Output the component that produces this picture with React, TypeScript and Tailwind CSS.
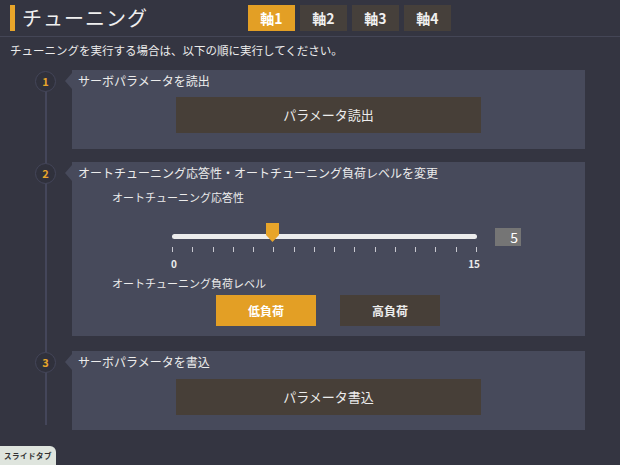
import { useState } from 'react';

const font = { fontFamily: '"Noto Sans CJK JP", "Noto Sans", sans-serif' };

const StepCircle = ({ n }: { n: number }) => (
  <div className="flex h-[21px] w-[21px] items-center justify-center rounded-full border border-[#44465a] bg-[#30313c] text-[11px] font-bold text-[#e8a52a]">
    {n}
  </div>
);

const Pointer = () => (
  <div className="h-0 w-0 border-y-[8px] border-r-[7px] border-y-transparent border-r-[#474a5b]"></div>
);

const Step = ({
  n,
  title,
  children,
}: {
  n: number;
  title: string;
  children: React.ReactNode;
}) => (
  <div className="flex">
    <div className="ml-[35px] mt-[1px] flex w-[30px] items-start">
      <StepCircle n={n} />
    </div>
    <div className="mt-[3px]">
      <Pointer />
    </div>
    <div className="w-[513px] bg-[#474a5b]">
      <div className="ml-[6px] mt-[2px] h-[18px] text-[12px] leading-[18px] text-[#ececec]">
        {title}
      </div>
      {children}
    </div>
  </div>
);

const App = () => {
  const [axis, setAxis] = useState(1);
  const [load, setLoad] = useState(0);
  const value = 5;
  const ticks = Array.from({ length: 16 }, (_, i) => i);

  return (
    <div
      className="relative h-[465px] w-[620px] overflow-hidden bg-[#343541] text-[#ececec]"
      style={font}
    >
      <div className="flex h-[37px] items-center border-b border-[#444656]">
        <div className="ml-[10px] h-[26px] w-[5px] bg-[#e8a52a]"></div>
        <div className="ml-[7px] w-[226px] text-[20px] leading-[26px] tracking-[1px] text-[#f0f0f0]">
          チューニング
        </div>
        <div className="flex gap-[5px]">
          {[1, 2, 3, 4].map((i) => (
            <button
              key={i}
              onClick={() => setAxis(i)}
              className={`h-[26px] w-[47px] text-[14px] font-bold ${
                axis === i
                  ? 'bg-[#e39f25] text-white'
                  : 'bg-[#46403b] text-[#f0f0f0]'
              }`}
            >
              軸{i}
            </button>
          ))}
        </div>
      </div>

      <div className="ml-[10px] mt-[5px] text-[11.5px] leading-[16px]">
        チューニングを実行する場合は、以下の順に実行してください。
      </div>

      <div className="relative mt-[12px]">
        <div className="absolute left-[45px] top-[10px] h-[345px] w-[2px] bg-[#44465a]"></div>
        <div className="relative flex flex-col gap-[13px]">
          <Step n={1} title="サーボパラメータを読出">
            <div className="ml-[104px] mt-[7px] flex h-[36px] w-[305px] items-center justify-center bg-[#473f38] text-[13px]">
              パラメータ読出
            </div>
            <div className="h-[16px]"></div>
          </Step>

          <Step n={2} title="オートチューニング応答性・オートチューニング負荷レベルを変更">
            <div className="ml-[40px] mt-[7px] text-[11px] leading-[16px]">
              オートチューニング応答性
            </div>
            <div className="mt-[20px] flex items-start">
              <div className="relative ml-[100px] w-[305px]">
                <div className="mt-[9px] h-[5px] w-[305px] rounded-full bg-[#ececec]"></div>
                <svg
                  className="absolute left-[93px] -top-[2px]"
                  width="15"
                  height="19"
                  viewBox="0 0 15 19"
                >
                  <path d="M1 0 H14 V12 L7.5 19 L1 12 Z" fill="#e8a52a" />
                </svg>
                <div className="mt-[8px] flex justify-between">
                  {ticks.map((t) => (
                    <div key={t} className="h-[5px] w-[1px] bg-[#c8c8d0]"></div>
                  ))}
                </div>
                <div className="mt-[5px] flex justify-between text-[10px] font-bold leading-[14px]">
                  <span className="-ml-[1px]">0</span>
                  <span className="-mr-[3px]">15</span>
                </div>
              </div>
              <div className="ml-[18px] mt-[3px] flex h-[18px] w-[26px] items-center justify-end bg-[#757575] pr-[3px] text-[14px] text-white">
                {value}
              </div>
            </div>
            <div className="ml-[40px] mt-[4px] text-[11px] leading-[16px]">
              オートチューニング負荷レベル
            </div>
            <div className="ml-[144px] mt-[4px] flex gap-[24px]">
              <button
                onClick={() => setLoad(0)}
                className={`h-[31px] w-[100px] text-[12px] font-bold ${
                  load === 0 ? 'bg-[#e39f25] text-white' : 'bg-[#473f38]'
                }`}
              >
                低負荷
              </button>
              <button
                onClick={() => setLoad(1)}
                className={`h-[31px] w-[100px] text-[12px] font-bold ${
                  load === 1 ? 'bg-[#e39f25] text-white' : 'bg-[#473f38]'
                }`}
              >
                高負荷
              </button>
            </div>
            <div className="h-[10px]"></div>
          </Step>

          <div className="mt-[2px]">
            <Step n={3} title="サーボパラメータを書込">
              <div className="ml-[104px] mt-[8px] flex h-[36px] w-[305px] items-center justify-center bg-[#473f38] text-[13px]">
                パラメータ書込
              </div>
              <div className="h-[15px]"></div>
            </Step>
          </div>
        </div>
      </div>

      <div className="absolute bottom-0 left-0 flex h-[19px] w-[56px] items-center justify-center rounded-tr-[6px] bg-[#dfe5de] text-[7.5px] font-bold tracking-[0.5px] text-[#333]">
        スライドタブ
      </div>
    </div>
  );
};

export default App;
